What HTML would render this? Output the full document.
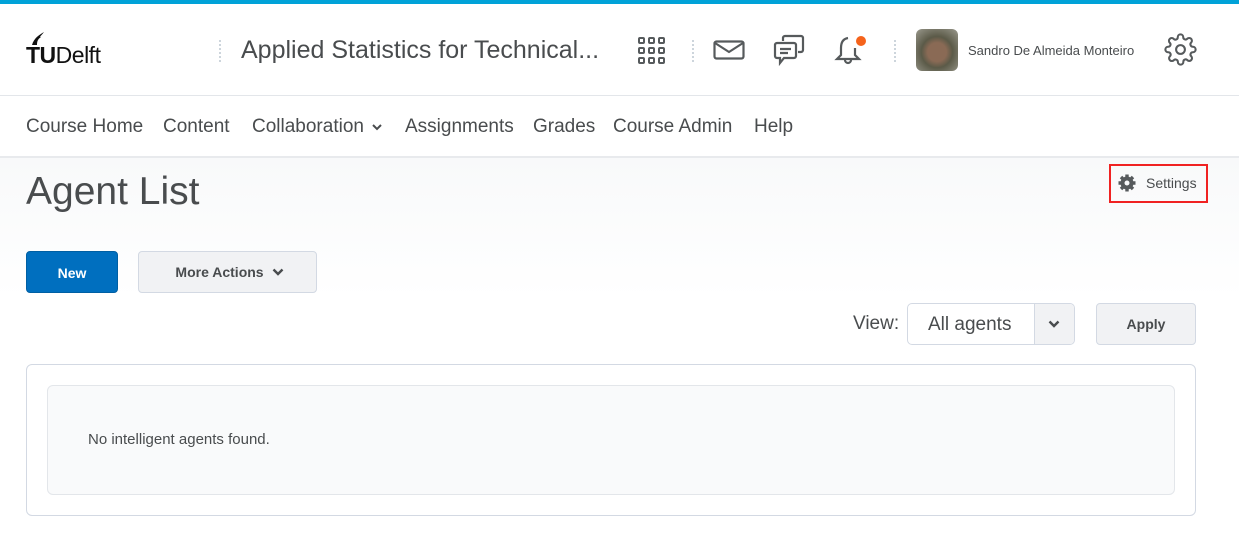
<!DOCTYPE html>
<html><head><style>
*{box-sizing:border-box;margin:0;padding:0}
body{width:1239px;height:535px;overflow:hidden;background:#fff;font-family:"Liberation Sans",sans-serif;color:#494c4e;position:relative}
.abs{position:absolute}
.top{top:0;left:0;width:1239px;height:4px;background:#00a2d8}
.hdr{top:95px;left:0;width:1239px;height:1px;background:#e3e6ea}
.nav{top:156px;left:0;width:1239px;height:2px;background:#e8eaed}
.grad{top:158px;left:0;width:1239px;height:140px;background:linear-gradient(#f8f9fa,#fff)}
.dots{width:2px;height:22px;background:repeating-linear-gradient(#cdd5dc 0 2px,transparent 2px 4px)}
.navi{top:116px;font-size:19px;color:#494c4e}
.btn{border-radius:4px;font-size:14px;font-weight:bold;text-align:center}
</style></head><body>
<div class="abs top"></div>
<!-- logo -->
<div class="abs" style="left:26px;top:42px;font-size:23px;color:#111;letter-spacing:-0.5px"><span style="font-weight:bold">TU</span>Delft</div>
<svg class="abs" style="left:29px;top:31px" width="18" height="15" viewBox="0 0 18 15"><path d="M3 14 C5 7 10 4 15 1 C12 5 10 6 12 6 C9 8 8 10 8 14" fill="#111"/></svg>
<div class="abs dots" style="left:219px;top:40px"></div>
<div class="abs" style="left:241px;top:36px;font-size:25px;color:#494c4e">Applied Statistics for Technical...</div>
<!-- grid -->
<svg class="abs" style="left:638px;top:37px" width="28" height="28" viewBox="0 0 28 28" fill="none" stroke="#565a5c" stroke-width="2"><g><rect x="1" y="1" width="5" height="5" rx="1"/><rect x="11" y="1" width="5" height="5" rx="1"/><rect x="21" y="1" width="5" height="5" rx="1"/><rect x="1" y="11" width="5" height="5" rx="1"/><rect x="11" y="11" width="5" height="5" rx="1"/><rect x="21" y="11" width="5" height="5" rx="1"/><rect x="1" y="21" width="5" height="5" rx="1"/><rect x="11" y="21" width="5" height="5" rx="1"/><rect x="21" y="21" width="5" height="5" rx="1"/></g></svg>
<div class="abs dots" style="left:692px;top:40px"></div>
<svg class="abs" style="left:713px;top:40px" width="32" height="20" viewBox="0 0 32 20" fill="none" stroke="#565a5c" stroke-width="2.2"><rect x="1.5" y="1.5" width="29" height="17" rx="2"/><path d="M2 3 L16 12 L30 3"/></svg>
<svg class="abs" style="left:773px;top:34px" width="32" height="32" viewBox="0 0 32 32" fill="none" stroke="#565a5c" stroke-width="2.2"><path d="M10 7 V4 a2 2 0 0 1 2-2 H28 a2 2 0 0 1 2 2 V16 a2 2 0 0 1-2 2 H25"/><path d="M4 9 H21 a2 2 0 0 1 2 2 V22 a2 2 0 0 1-2 2 H11 L7 29 V24 H4 a2 2 0 0 1-2-2 V11 a2 2 0 0 1 2-2Z"/><path d="M7 15 H18 M7 19 H15"/></svg>
<svg class="abs" style="left:834px;top:34px" width="32" height="32" viewBox="0 0 32 32" fill="none" stroke="#565a5c" stroke-width="2.2"><path d="M14 4 C8 5 7 10 7 14 V21 L3 25 H25 L21 21 V14"/><path d="M11 26 a3 3 0 0 0 6 0"/></svg>
<div class="abs" style="left:856px;top:36px;width:10px;height:10px;border-radius:50%;background:#f5631b"></div>
<div class="abs dots" style="left:894px;top:40px"></div>
<div class="abs" style="left:916px;top:29px;width:42px;height:42px;border-radius:6px;background:radial-gradient(circle at 50% 55%,#8a6a55 0 30%,#5b5a48 50%,#9b9a8e 100%)"></div>
<div class="abs" style="left:968px;top:43px;font-size:13px;color:#494c4e">Sandro De Almeida Monteiro</div>
<svg class="abs" style="left:1164px;top:33px" width="33" height="33" viewBox="0 0 24 24" fill="none" stroke="#565a5c" stroke-width="1.5"><circle cx="12" cy="12" r="3.2"/><path d="M19.4 15a1.650 1.65 0 0 0 .33 1.82l.06.06a2 2 0 1 1-2.83 2.830l-.06-.06a1.650 1.65 0 0 0-1.82-.33 1.650 1.65 0 0 0-1 1.51V21a2 2 0 1 1-4 0v-.09A1.650 1.65 0 0 0 9 19.4a1.650 1.65 0 0 0-1.82.33l-.06.06a2 2 0 1 1-2.83-2.83l.06-.06A1.650 1.65 0 0 0 4.68 15a1.650 1.65 0 0 0-1.51-1H3a2 2 0 1 1 0-4h.09A1.650 1.65 0 0 0 4.6 9a1.650 1.65 0 0 0-.33-1.82l-.06-.06a2 2 0 1 1 2.83-2.83l.06.06A1.650 1.65 0 0 0 9 4.68a1.650 1.65 0 0 0 1-1.51V3a2 2 0 1 1 4 0v.09a1.650 1.65 0 0 0 1 1.510 1.650 1.65 0 0 0 1.82-.33l.06-.06a2 2 0 1 1 2.83 2.83l-.06.06A1.650 1.65 0 0 0 19.4 9a1.650 1.65 0 0 0 1.51 1H21a2 2 0 1 1 0 4h-.09a1.650 1.65 0 0 0-1.51 1z"/></svg>
<div class="abs hdr"></div>
<!-- nav -->
<div class="abs navi" style="left:26px">Course Home</div>
<div class="abs navi" style="left:163px">Content</div>
<div class="abs navi" style="left:252px">Collaboration</div>
<svg class="abs" style="left:371px;top:123px" width="12" height="8" viewBox="0 0 12 8" fill="none" stroke="#494c4e" stroke-width="2"><path d="M2 2 L6 6 L10 2"/></svg>
<div class="abs navi" style="left:405px">Assignments</div>
<div class="abs navi" style="left:533px">Grades</div>
<div class="abs navi" style="left:613px">Course Admin</div>
<div class="abs navi" style="left:754px">Help</div>
<div class="abs nav"></div>
<div class="abs grad"></div>
<div class="abs" style="left:26px;top:170px;font-size:39px;color:#494c4e">Agent List</div>
<div class="abs" style="left:1109px;top:164px;width:99px;height:39px;border:2px solid #f02222"></div>
<svg class="abs" style="left:1117px;top:173px" width="20" height="20" viewBox="0 0 20 20"><circle cx="10" cy="10" r="6.5" fill="#565a5c"/><g stroke="#565a5c" stroke-width="3.4"><path d="M10 1.5V18.5M1.5 10H18.5M4 4L16 16M16 4L4 16"/></g><circle cx="10" cy="10" r="2.5" fill="#f9fafb"/></svg>
<div class="abs" style="left:1146px;top:175px;font-size:14px;color:#494c4e">Settings</div>
<div class="abs btn" style="left:26px;top:251px;width:92px;height:42px;background:#006fbf;color:#fff;line-height:42px;border:1px solid #005fa3">New</div>
<div class="abs btn" style="left:138px;top:251px;width:179px;height:42px;background:#f1f2f4;border:1px solid #d3d9e3;line-height:40px;color:#494c4e;padding-right:16px">More Actions</div>
<svg class="abs" style="left:272px;top:268px" width="12" height="8" viewBox="0 0 12 8" fill="none" stroke="#494c4e" stroke-width="2.4"><path d="M1.5 1.5 L6 6 L10.5 1.5"/></svg>
<div class="abs" style="left:853px;top:313px;font-size:19px;color:#494c4e">View:</div>
<div class="abs" style="left:907px;top:303px;width:168px;height:42px;border:1px solid #d3d9e3;border-radius:5px;background:#fff;overflow:hidden">
<div class="abs" style="left:20px;top:10px;font-size:19px">All agents</div>
<div class="abs" style="left:126px;top:0;width:42px;height:42px;background:#f1f2f4;border-left:1px solid #d3d9e3"></div>
</div>
<svg class="abs" style="left:1048px;top:320px" width="12" height="8" viewBox="0 0 12 8" fill="none" stroke="#494c4e" stroke-width="2.4"><path d="M1.5 1.5 L6 6 L10.5 1.5"/></svg>
<div class="abs btn" style="left:1096px;top:303px;width:100px;height:42px;background:#f1f2f4;border:1px solid #d3d9e3;line-height:40px;color:#494c4e">Apply</div>
<div class="abs" style="left:26px;top:364px;width:1170px;height:152px;border:1px solid #d3d9e3;border-radius:6px;background:#fff"></div>
<div class="abs" style="left:47px;top:385px;width:1128px;height:110px;border:1px solid #e3e6ea;border-radius:6px;background:#f9fafb"></div>
<div class="abs" style="left:88px;top:431px;font-size:15px;color:#494c4e">No intelligent agents found.</div>
</body></html>
